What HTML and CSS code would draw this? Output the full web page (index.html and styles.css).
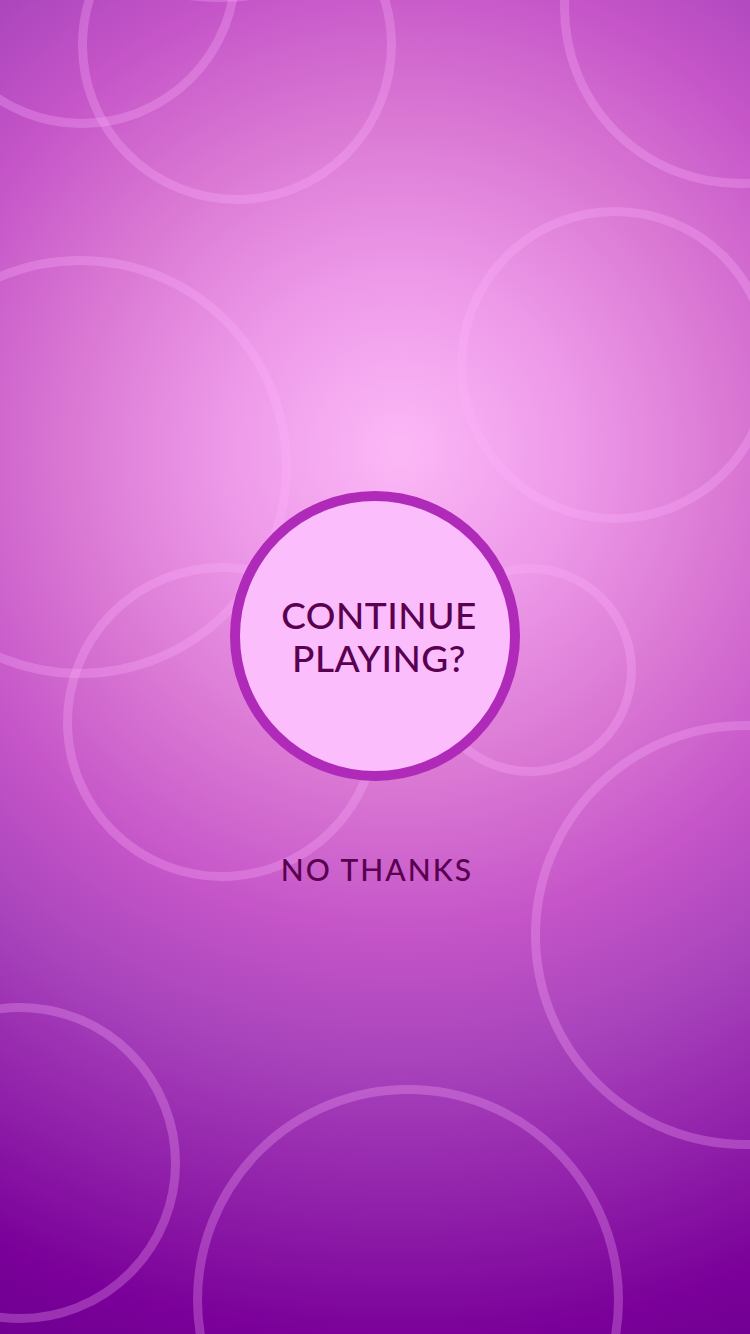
FILE: index.html
```
<!DOCTYPE html>
<html>
<head>
  <title>Continue playing?</title>
  <link rel="stylesheet" href="styles.css">
</head>
<body>
  <div class="screen">
    <div class="bubbles">
      <span class="ring ring-k"></span>
      <span class="ring ring-a"></span>
      <span class="ring ring-b"></span>
      <span class="ring ring-c"></span>
      <span class="ring ring-d"></span>
      <span class="ring ring-e"></span>
      <span class="ring ring-f"></span>
      <span class="ring ring-g"></span>
      <span class="ring ring-h"></span>
      <span class="ring ring-i"></span>
      <span class="ring ring-j"></span>
    </div>

    <main class="prompt">
      <button class="continue-btn" type="button">CONTINUE<br>PLAYING?</button>
      <button class="decline-btn" type="button">NO THANKS</button>
    </main>
  </div>
</body>
</html>
```

FILE: styles.css
```
body {
  margin: 0;
  font-family: Lato, "Open Sans", Arial, sans-serif;
}

.screen {
  position: relative;
  width: 750px;
  height: 1334px;
  overflow: hidden;
  background: radial-gradient(circle at 400px 450px,
    #fcb8f6 0px,
    #ee9ae9 170px,
    #da78d4 330px,
    #c555c8 480px,
    #a944bc 610px,
    #7a0099 890px,
    #6c0090 1000px);
}

/* decorative bubbles, placed on the canvas by centre and radius */
.ring {
  position: absolute;
  box-sizing: border-box;
  border: 9px solid rgba(255, 180, 255, 0.28);
  border-radius: 50%;
}

.ring-a { left: -76px;  top: -188px; width: 316px; height: 316px; }
.ring-b { left: 78px;   top: -114px; width: 318px; height: 318px; }
.ring-c { left: 560px;  top: -172px; width: 360px; height: 360px; }
.ring-d { left: 457px;  top: 207px;  width: 316px; height: 316px; }
.ring-e { left: -131px; top: 256px;  width: 422px; height: 422px; }
.ring-f { left: 63px;   top: 563px;  width: 318px; height: 318px; }
.ring-g { left: 424px;  top: 564px;  width: 212px; height: 212px; }
.ring-h { left: 531px;  top: 721px;  width: 428px; height: 428px; }
.ring-i { left: -140px; top: 1003px; width: 320px; height: 320px; }
.ring-j { left: 193px;  top: 1085px; width: 430px; height: 430px; }
.ring-k { left: -32px;  top: -502px; width: 504px; height: 504px; }

.prompt {
  position: relative;
  display: flex;
  flex-direction: column;
  align-items: center;
  padding-top: 491px;
}

.continue-btn {
  width: 290px;
  height: 290px;
  box-sizing: border-box;
  border: 10px solid #b02ab9;
  border-radius: 50%;
  background: #fcbdfc;
  color: #590050;
  font-family: inherit;
  font-size: 37px;
  font-weight: 500;
  line-height: 43px;
  letter-spacing: 0.5px;
  padding: 0 0 0 8px;
  cursor: pointer;
}

.decline-btn {
  margin-top: 70px;
  padding: 0 0 0 4px;
  border: none;
  background: none;
  color: #590050;
  font-family: inherit;
  font-size: 30px;
  font-weight: 500;
  letter-spacing: 2px;
  line-height: 36px;
  cursor: pointer;
}
```
